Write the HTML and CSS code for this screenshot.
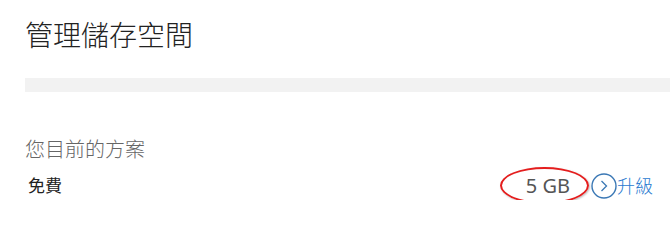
FILE: index.html
```html
<!DOCTYPE html>
<html lang="zh-Hant">
<head>
<meta charset="utf-8">
<title>管理儲存空間</title>
<link rel="stylesheet" href="styles.css">
</head>
<body>
<div class="page">
  <h1 class="title">管理儲存空間</h1>
  <div class="bar"></div>
  <h2 class="section-title">您目前的方案</h2>
  <div class="plan-row">
    <span class="plan-name">免費</span>
    <div class="plan-actions">
      <span class="size">5 GB</span>
      <a class="upgrade" href="#">
        <svg class="upgrade-icon" width="26" height="26" viewBox="0 0 26 26" aria-hidden="true">
          <circle cx="13" cy="13" r="12" fill="none" stroke="#3b78b5" stroke-width="1.4"/>
          <path d="M10.5 8 L15.5 13 L10.5 18" fill="none" stroke="#3b78b5" stroke-width="1.3"/>
        </svg>
        <span class="upgrade-text">升級</span>
      </a>
    </div>
  </div>
</div>
</body>
</html>
```
FILE: styles.css
```css
html, body {
  margin: 0;
  padding: 0;
  background: #ffffff;
}
body {
  font-family: "Noto Sans", "Noto Sans CJK TC", sans-serif;
  color: #222;
}
.page {
  padding: 17px 0 0 25px;
}
.title {
  margin: 0;
  font-size: 28px;
  line-height: 36px;
  font-weight: 300;
  color: #222;
}
.bar {
  margin-top: 25px;
  height: 14px;
  background: #f2f2f2;
}
.section-title {
  margin: 44px 0 0 0;
  font-size: 20px;
  line-height: 28px;
  font-weight: 300;
  color: #666;
}
.plan-row {
  margin-top: 8px;
  height: 28px;
  display: flex;
  align-items: center;
  justify-content: space-between;
  padding-right: 17px;
}
.plan-name {
  margin-left: 3px;
  font-size: 17px;
  line-height: 28px;
  color: #222;
}
.plan-actions {
  display: flex;
  align-items: center;
}
.size {
  position: relative;
  display: inline-block;
  padding: 0 19px 0 26px;
  font-size: 20px;
  line-height: 28px;
  color: #555;
}
.size::after {
  content: "";
  position: absolute;
  left: 0;
  right: 0;
  top: -5px;
  bottom: -4px;
  border: 2px solid #e41e1e;
  border-radius: 50%;
  box-shadow: 1px 1px 2px rgba(0,0,0,0.25);
}
.upgrade {
  display: flex;
  align-items: center;
  margin-left: 2px;
  text-decoration: none;
  color: #2a7ad0;
}
.upgrade-icon {
  display: block;
}
.upgrade-text {
  font-size: 18px;
  line-height: 28px;
  font-weight: 300;
}
```
